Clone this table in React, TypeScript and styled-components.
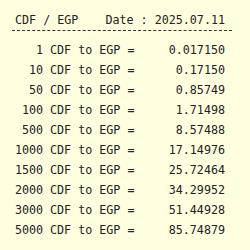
import React from 'react';
import styled, { createGlobalStyle } from 'styled-components';

const GlobalStyle = createGlobalStyle`
  html, body {
    margin: 0;
    padding: 0;
    background: #ffffe0;
  }
`;

const Panel = styled.div`
  width: 250px;
  height: 250px;
  box-sizing: border-box;
  padding: 13px 0 0 12px;
  background: #ffffe0;
  font-family: "DejaVu Sans Mono", monospace;
  font-size: 11.7px;
  color: #222;
`;

const Header = styled.div`
  width: 220px;
  height: 18px;
  display: flex;
  justify-content: space-between;
  padding: 0 7px 0 3px;
  box-sizing: border-box;
  line-height: 14px;
  border-bottom: 1px dashed #333;
  white-space: pre;
`;

const Rows = styled.div`
  margin-top: 9px;
  width: 213px;
  padding-left: 3px;
  box-sizing: border-box;
`;

const Row = styled.div`
  display: grid;
  grid-template-columns: 28px 1fr auto;
  line-height: 20px;
  white-space: pre;
`;

const Amount = styled.span`
  text-align: right;
`;

const Value = styled.span`
  text-align: right;
`;

const rates: [number, string][] = [
  [1, '0.017150'],
  [10, '0.17150'],
  [50, '0.85749'],
  [100, '1.71498'],
  [500, '8.57488'],
  [1000, '17.14976'],
  [1500, '25.72464'],
  [2000, '34.29952'],
  [3000, '51.44928'],
  [5000, '85.74879'],
];

const App: React.FC = () => (
  <>
    <GlobalStyle />
    <Panel>
      <Header>
        <span>CDF / EGP</span>
        <span>Date : 2025.07.11</span>
      </Header>
      <Rows>
        {rates.map(([amt, val]) => (
          <Row key={amt}>
            <Amount>{amt}</Amount>
            <span> CDF to EGP =</span>
            <Value>{val}</Value>
          </Row>
        ))}
      </Rows>
    </Panel>
  </>
);

export default App;
